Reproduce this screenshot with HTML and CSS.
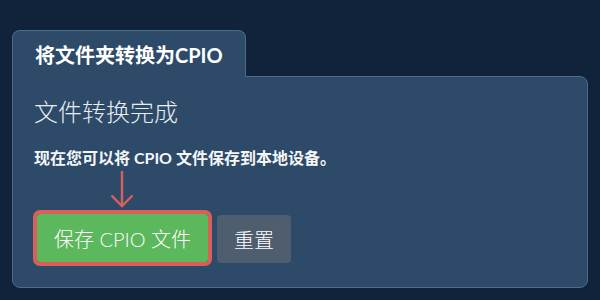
FILE: index.html
```html
<!DOCTYPE html>
<html lang="zh">
<head>
<meta charset="utf-8">
<link rel="stylesheet" href="styles.css">
</head>
<body>
<div class="widget">
  <div class="tab">将文件夹转换为CPIO</div>
  <div class="panel">
    <h2 class="heading">文件转换完成</h2>
    <p class="message">现在您可以将 CPIO 文件保存到本地设备。</p>
    <div class="actions">
      <div class="save-wrap">
        <svg class="arrow" width="26" height="38" viewBox="0 0 26 38">
          <path d="M13 1 V35.5" stroke="#d9605a" stroke-width="2.4" fill="none"/>
          <path d="M2.5 25.5 L13 36 L23.5 25.5" stroke="#d9605a" stroke-width="2.4" fill="none" stroke-linejoin="miter"/>
        </svg>
        <button class="btn btn-save">保存 CPIO 文件</button>
      </div>
      <button class="btn btn-reset">重置</button>
    </div>
  </div>
</div>
</body>
</html>
```

FILE: styles.css
```css
html, body {
  margin: 0;
  padding: 0;
  background: #11233a;
}
body {
  font-family: Lato, "Noto Sans CJK SC", sans-serif;
  color: #f2f4f6;
}
.widget {
  padding: 30px 12px 0 12px;
}
.tab {
  display: inline-block;
  position: relative;
  z-index: 1;
  background: #2d4a69;
  border: 1px solid #4d6a8a;
  border-bottom: none;
  border-radius: 8px 8px 0 0;
  padding: 4px 22px 2px 22px;
  line-height: 40px;
  font-size: 20px;
  font-weight: 700;
  color: #ffffff;
  margin-bottom: -1px;
}
.panel {
  background: #2d4a69;
  border: 1px solid #4d6a8a;
  border-radius: 0 8px 8px 8px;
  padding: 20px 21px 24px 21px;
}
.heading {
  margin: 0;
  font-size: 24px;
  line-height: 30px;
  font-weight: 300;
  color: #e9edf1;
}
.message {
  margin: 19px 0 0 0;
  font-size: 16px;
  line-height: 24px;
  font-weight: 700;
  color: #f4f6f8;
}
.actions {
  margin-top: 44px;
  display: flex;
  gap: 9px;
  align-items: flex-start;
}
.save-wrap {
  position: relative;
  margin-left: 3px;
}
.arrow {
  position: absolute;
  left: 50%;
  bottom: calc(100% + 6px);
  transform: translateX(-50%);
}
.btn {
  font-family: Lato, "Noto Sans CJK SC", sans-serif;
  font-size: 20px;
  font-weight: 300;
  height: 48px;
  padding: 0 17px;
  border: none;
  border-radius: 4px;
  color: #ffffff;
}
.btn-save {
  background: #5cb85c;
  outline: 4px solid #d9605a;
  border-radius: 3px;
}
.btn-reset {
  background: #4f5e6e;
  margin-top: 1px;
}
```
